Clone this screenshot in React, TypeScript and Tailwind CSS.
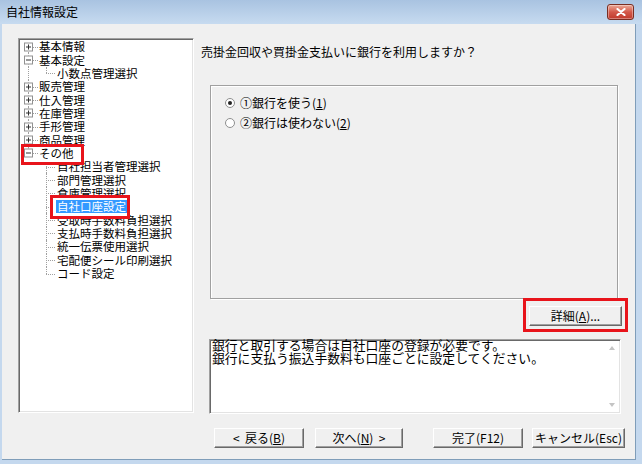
type Row = {
  label: string;
  level: 0 | 1;
  box?: "+" | "-";
  pos?: "first" | "last";
  rootPass?: boolean;
  lastChild?: boolean;
  selected?: boolean;
  mark?: boolean;
};

const rows: Row[] = [
  { label: "基本情報", level: 0, box: "+", pos: "first" },
  { label: "基本設定", level: 0, box: "-" },
  { label: "小数点管理選択", level: 1, rootPass: true, lastChild: true },
  { label: "販売管理", level: 0, box: "+" },
  { label: "仕入管理", level: 0, box: "+" },
  { label: "在庫管理", level: 0, box: "+" },
  { label: "手形管理", level: 0, box: "+" },
  { label: "商品管理", level: 0, box: "+" },
  { label: "その他", level: 0, box: "-", pos: "last", mark: true },
  { label: "自社担当者管理選択", level: 1 },
  { label: "部門管理選択", level: 1 },
  { label: "倉庫管理選択", level: 1 },
  { label: "自社口座設定", level: 1, selected: true },
  { label: "受取時手数料負担選択", level: 1 },
  { label: "支払時手数料負担選択", level: 1 },
  { label: "統一伝票使用選択", level: 1 },
  { label: "宅配便シール印刷選択", level: 1 },
  { label: "コード設定", level: 1, lastChild: true },
];

const dot = "border-dotted border-[#a0a0a0]";

function ExpandBox({ sign }: { sign: "+" | "-" }) {
  return (
    <span className="absolute left-[5px] top-1/2 h-[9px] w-[9px] -translate-y-1/2 border border-[#919191] bg-white">
      <span className="absolute left-[1px] top-[3px] h-px w-[5px] bg-[#333]" />
      {sign === "+" && <span className="absolute left-[3px] top-[1px] h-[5px] w-px bg-[#333]" />}
    </span>
  );
}

function TreeRow({ r }: { r: Row }) {
  return (
    <div className={`flex h-[13.35px] items-center ${r.mark ? "relative z-20" : ""}`}>
      <div className="relative h-full w-[20px] shrink-0">
        {r.level === 0 && r.box ? (
          <>
            {r.pos !== "first" && <span className={`absolute left-[9px] top-0 h-1/2 border-l ${dot}`} />}
            {r.pos !== "last" && <span className={`absolute left-[9px] top-1/2 h-1/2 border-l ${dot}`} />}
            <span className={`absolute left-[14px] top-1/2 w-[5px] border-t ${dot}`} />
            <ExpandBox sign={r.box} />
          </>
        ) : r.rootPass ? (
          <span className={`absolute left-[9px] top-0 h-full border-l ${dot}`} />
        ) : null}
      </div>
      {r.level === 1 && (
        <div className="relative h-full w-[18px] shrink-0">
          <span className={`absolute left-[7px] top-0 border-l ${dot} ${r.lastChild ? "h-1/2" : "h-full"}`} />
          <span className={`absolute left-[7px] top-1/2 w-[9px] border-t ${dot}`} />
        </div>
      )}
      <span
        className={`whitespace-nowrap text-[11.5px] leading-[13px] ${
          r.selected ? "relative z-20 -ml-px bg-[#3399ff] px-px text-white" : ""
        }`}
      >
        {r.label}
      </span>
    </div>
  );
}

function Tree() {
  return (
    <div className="relative h-[375px] w-[176px] shrink-0 overflow-hidden border border-b-white border-l-[#a0a0a0] border-r-white border-t-[#a0a0a0] bg-white shadow-[inset_1px_1px_0_#696969,inset_-1px_-1px_0_#e3e3e3]">
      <div className="pt-px">
        {rows.map((r) => (
          <TreeRow key={r.label} r={r} />
        ))}
      </div>
      {/* 注釈の赤枠 */}
      <div className="absolute left-[2px] top-[105px] z-10 h-[21px] w-[63px] border-[3px] border-[#e8141b] bg-white" />
      <div className="absolute left-[31px] top-[156px] z-10 h-[24px] w-[80px] border-[3px] border-[#e8141b] bg-white" />
    </div>
  );
}

function U({ children }: { children: string }) {
  return <span className="underline underline-offset-1">{children}</span>;
}

function Radio({ checked, children }: { checked?: boolean; children: React.ReactNode }) {
  return (
    <div className="flex h-[20px] items-center">
      <span className="flex h-[10px] w-[10px] items-center justify-center rounded-full border border-[#8e8f8f] bg-white">
        {checked && <span className="h-[4px] w-[4px] rounded-full bg-[#222]" />}
      </span>
      <span className="ml-[5px] whitespace-nowrap text-[12px] leading-[14px]">{children}</span>
    </div>
  );
}

const btn =
  "flex h-[20px] items-center justify-center whitespace-nowrap border border-b-[#696969] border-l-white border-r-[#696969] border-t-white bg-[#f0f0f0] text-[12px] leading-[14px] shadow-[inset_-1px_-1px_0_#a0a0a0]";

function RightPane() {
  return (
    <div className="ml-[7px] flex flex-col pt-[7px]">
      <div className="h-[14px] whitespace-nowrap text-[12px] leading-[14px]">
        売掛金回収や買掛金支払いに銀行を利用しますか？
      </div>

      <div className="ml-[9px] mt-[26px] flex h-[214px] w-[408px] flex-col border border-[#a0a0a0] pl-[14px] pt-[7px] shadow-[inset_1px_1px_0_#fff,1px_1px_0_#fff]">
        <Radio checked>
          ①銀行を使う(<U>1</U>)
        </Radio>
        <Radio>
          ②銀行は使わない(<U>2</U>)
        </Radio>
      </div>

      <div className="relative ml-[328px] mt-[7px] w-[93px]">
        <div className={`${btn} h-[19px] w-[93px]`}>
          詳細(<U>A</U>)...
        </div>
        <div className="absolute -bottom-[6px] -left-[6px] -right-[6px] -top-[8px] border-[3px] border-[#e8141b]" />
      </div>

      <div className="ml-[8px] mt-[13px] flex h-[75px] w-[412px] border border-b-white border-l-[#a0a0a0] border-r-white border-t-[#a0a0a0] bg-white shadow-[inset_1px_1px_0_#696969,inset_-1px_-1px_0_#e3e3e3]">
        <div className="flex-1 pl-[2px] text-[12.8px] leading-[13px]">
          <div className="-mt-[2px] whitespace-nowrap">銀行と取引する場合は自社口座の登録が必要です。</div>
          <div className="whitespace-nowrap">銀行に支払う振込手数料も口座ごとに設定してください。</div>
        </div>
        <div className="flex w-[17px] flex-col items-center justify-between py-[6px]">
          <span className="h-0 w-0 border-b-[4px] border-x-[3.5px] border-b-[#c4c4c4] border-x-transparent" />
          <span className="h-0 w-0 border-t-[4px] border-x-[3.5px] border-t-[#c4c4c4] border-x-transparent" />
        </div>
      </div>

      <div className="ml-[13px] mt-[14px] flex">
        <div className={`${btn} w-[90px]`}>
          &lt;&nbsp;&nbsp;戻る(<U>B</U>)
        </div>
        <div className={`${btn} ml-[11px] w-[88px]`}>
          次へ(<U>N</U>)&nbsp;&nbsp;&gt;
        </div>
        <div className={`${btn} ml-[30px] w-[90px]`}>完了(F12)</div>
        <div className={`${btn} ml-[9px] w-[93px]`}>キャンセル(Esc)</div>
      </div>
    </div>
  );
}

export default function App() {
  return (
    <div className="flex h-[464px] w-[642px] flex-col bg-[#c4d8ee] font-['Noto_Sans_CJK_JP',sans-serif] text-black">
      <div className="flex h-[24px] shrink-0 items-center justify-between bg-gradient-to-b from-[#a9c3e1] to-[#c7dbf0] pl-[6px] pr-[8px]">
        <span className="text-[12px] leading-[14px]">自社情報設定</span>
        <div className="flex h-[16px] w-[27px] items-center justify-center rounded-[3px] border border-[#7a2e22] bg-gradient-to-b from-[#e9a898] via-[#d3594a] to-[#c0392b] shadow-[inset_0_0_0_1px_rgba(255,255,255,0.35)]">
          <svg width="10" height="8" viewBox="0 0 10 8">
            <path d="M1.5 1 L8.5 7 M8.5 1 L1.5 7" stroke="#fff" strokeWidth="2.2" strokeLinecap="round" />
          </svg>
        </div>
      </div>
      <div className="mb-[4px] ml-[2px] mr-[6px] flex flex-1 items-start border-b border-r border-[#7f9db9] bg-[#f0f0f0] pl-[16px] pt-[14px]">
        <Tree />
        <RightPane />
      </div>
    </div>
  );
}
